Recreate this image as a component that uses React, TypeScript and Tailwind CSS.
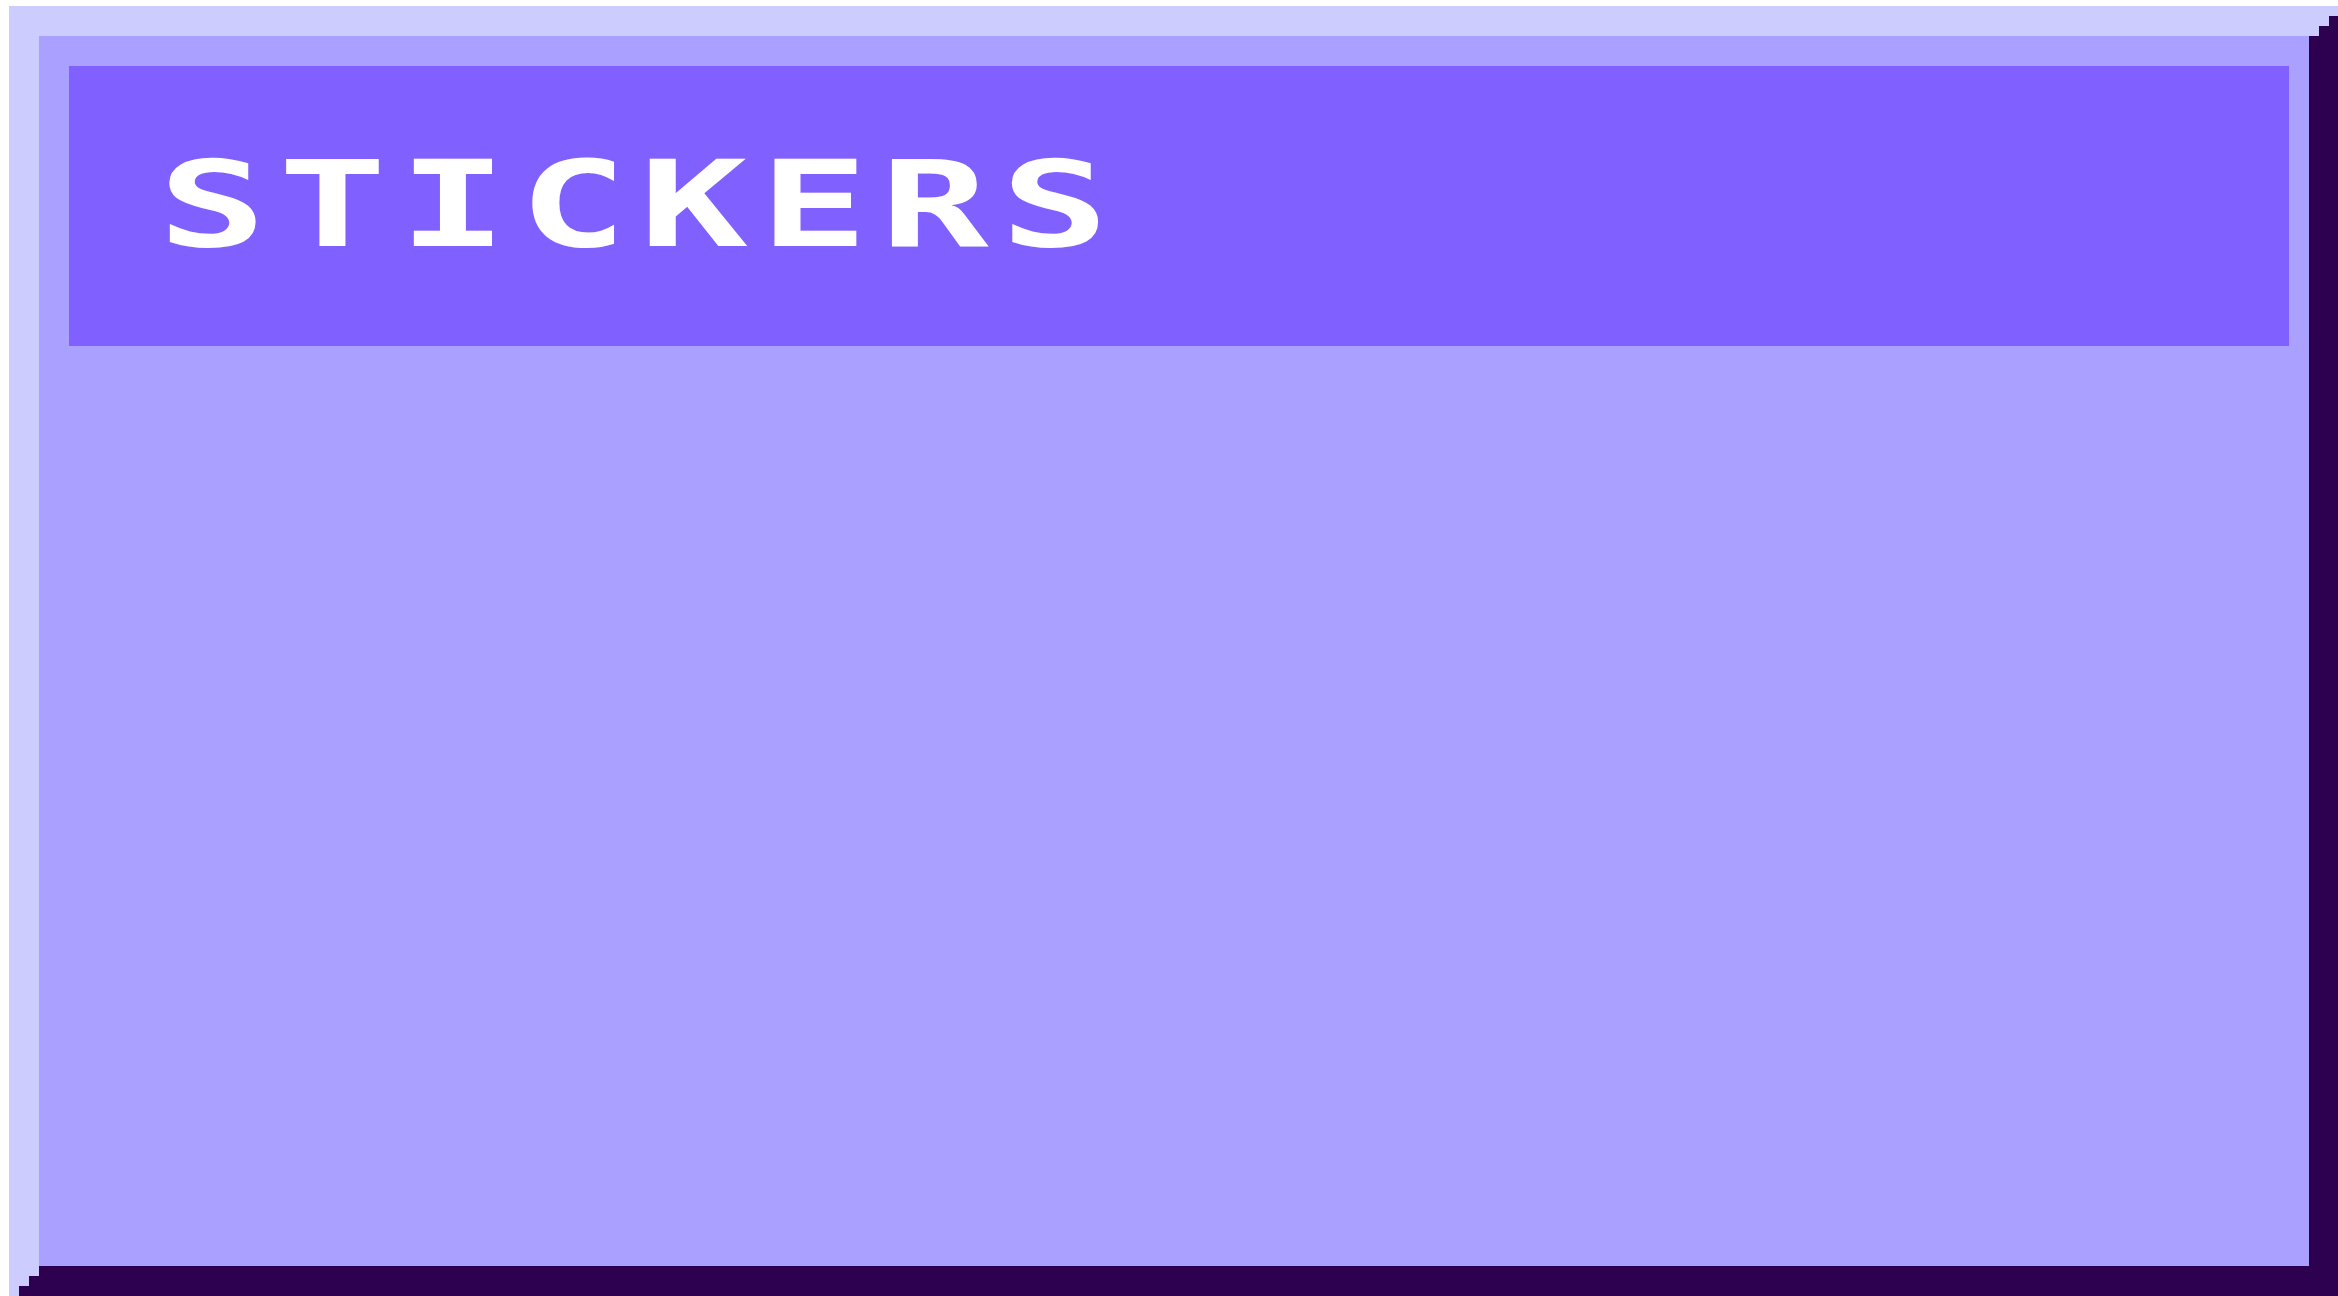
export default function App() {
  return (
    <div className="w-[2338px] h-[1296px] overflow-hidden bg-white pt-[6px] pl-[9px]">
      <div className="relative h-full w-full border-t-[30px] border-l-[30px] border-r-[29px] border-b-[30px] border-t-[#ccccff] border-l-[#ccccff] border-r-[#2e0050] border-b-[#2e0050] bg-[#aaa0ff] pt-[30px] pl-[30px] pr-[20px]">
        {/* pixel staircase corners */}
        <svg
          className="absolute -top-[30px] -right-[29px]"
          width="29"
          height="30"
          shapeRendering="crispEdges"
        >
          <rect x="0" y="0" width="29" height="30" fill="#2e0050" />
          <rect x="0" y="0" width="29" height="10" fill="#ccccff" />
          <rect x="0" y="10" width="20" height="10" fill="#ccccff" />
          <rect x="0" y="20" width="10" height="10" fill="#ccccff" />
        </svg>
        <svg
          className="absolute -bottom-[30px] -left-[30px]"
          width="30"
          height="30"
          shapeRendering="crispEdges"
        >
          <rect x="0" y="0" width="30" height="30" fill="#2e0050" />
          <rect x="0" y="0" width="30" height="10" fill="#ccccff" />
          <rect x="0" y="10" width="20" height="10" fill="#ccccff" />
          <rect x="0" y="20" width="10" height="10" fill="#ccccff" />
        </svg>

        <header className="h-[280px] bg-[#8060ff] pl-[89px] pt-[79px]">
          <h1 className="origin-left scale-x-[1.5] font-['DejaVu_Sans_Mono',monospace] text-[120px] font-bold leading-none tracking-[8px] text-white">
            STICKERS
          </h1>
        </header>
      </div>
    </div>
  );
}
